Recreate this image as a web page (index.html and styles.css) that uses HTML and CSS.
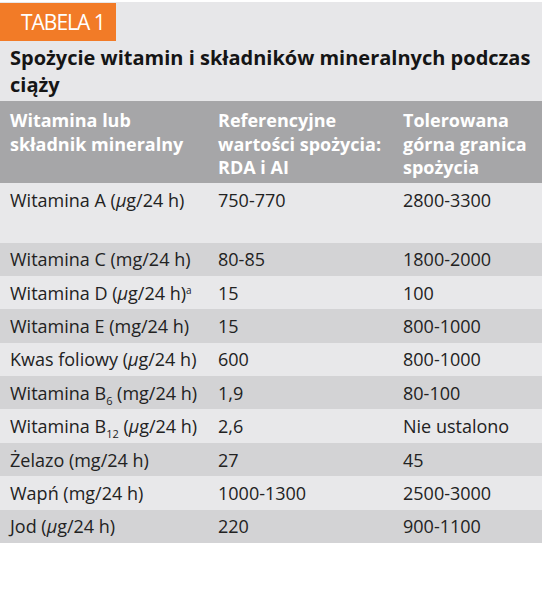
FILE: index.html
```
<!DOCTYPE html>
<html lang="pl">
<head>
    <meta charset="UTF-8">
    <meta name="viewport" content="width=device-width, initial-scale=1.0">
    <title>Tabela 1</title>
    <link rel="stylesheet" href="styles.css">
</head>
<body>

<div class="panel">
    <div class="caption">
        <div class="tab">TABELA 1</div>
        <h2 class="title">Spożycie witamin i składników mineralnych podczas ciąży</h2>
    </div>

    <table class="vit-table">
        <thead>
            <tr>
                <th class="col-a">Witamina lub<br>składnik mineralny</th>
                <th class="col-b">Referencyjne<br>wartości spożycia:<br>RDA i AI</th>
                <th class="col-c">Tolerowana<br>górna granica<br>spożycia</th>
            </tr>
        </thead>
        <tbody>
            <tr class="tall">
                <td>Witamina A (<i>µ</i>g/24 h)</td>
                <td>750-770</td>
                <td>2800-3300</td>
            </tr>
            <tr class="dark">
                <td>Witamina C (mg/24 h)</td>
                <td>80-85</td>
                <td>1800-2000</td>
            </tr>
            <tr>
                <td>Witamina D (<i>µ</i>g/24 h)<sup>a</sup></td>
                <td>15</td>
                <td>100</td>
            </tr>
            <tr class="dark">
                <td>Witamina E (mg/24 h)</td>
                <td>15</td>
                <td>800-1000</td>
            </tr>
            <tr>
                <td>Kwas foliowy (<i>µ</i>g/24 h)</td>
                <td>600</td>
                <td>800-1000</td>
            </tr>
            <tr class="dark">
                <td>Witamina B<sub>6</sub> (mg/24 h)</td>
                <td>1,9</td>
                <td>80-100</td>
            </tr>
            <tr>
                <td>Witamina B<sub>12</sub> (<i>µ</i>g/24 h)</td>
                <td>2,6</td>
                <td>Nie ustalono</td>
            </tr>
            <tr class="dark">
                <td>Żelazo (mg/24 h)</td>
                <td>27</td>
                <td>45</td>
            </tr>
            <tr>
                <td>Wapń (mg/24 h)</td>
                <td>1000-1300</td>
                <td>2500-3000</td>
            </tr>
            <tr class="dark">
                <td>Jod (<i>µ</i>g/24 h)</td>
                <td>220</td>
                <td>900-1100</td>
            </tr>
        </tbody>
    </table>
</div>

</body>
</html>
```
FILE: styles.css
```
* {
    box-sizing: border-box;
    margin: 0;
    padding: 0;
}

body {
    background-color: #ffffff;
    padding-top: 2px;
    font-family: "Open Sans", "Noto Sans", sans-serif;
    color: #222222;
}

.caption {
    background-color: #e7e7e9;
    padding-top: 1px;
}

.tab {
    display: inline-block;
    width: 116px;
    height: 38px;
    background-color: #f27b27;
    color: #ffffff;
    font-size: 21px;
    line-height: 38px;
    padding-left: 21px;
    letter-spacing: -1px;
}

.title {
    font-size: 20px;
    line-height: 27px;
    font-weight: 700;
    color: #151515;
    padding: 3px 10px 3px 10px;
}

.vit-table {
    width: 100%;
    border-collapse: collapse;
    font-size: 18px;
}

.vit-table th {
    background-color: #a6a6a8;
    color: #ffffff;
    font-weight: 700;
    text-align: left;
    vertical-align: top;
    line-height: 23.5px;
    padding: 8px 10px 3px 10px;
    white-space: nowrap;
}

.col-a {
    width: 208px;
}

.col-b {
    width: 185px;
}

.vit-table th.col-c {
    padding-right: 2px;
}

.vit-table td {
    background-color: #e8e8ea;
    height: 33.4px;
    padding: 0 10px;
    vertical-align: middle;
    white-space: nowrap;
}

.vit-table tr.dark td {
    background-color: #d3d3d5;
}

.vit-table tr.tall td {
    height: 60px;
    vertical-align: top;
    padding-top: 5px;
}

.vit-table i {
    font-style: italic;
}

.vit-table sup {
    font-size: 10px;
    vertical-align: 6px;
    line-height: 0;
}

.vit-table sub {
    font-size: 11px;
    vertical-align: -5px;
    line-height: 0;
}
```
